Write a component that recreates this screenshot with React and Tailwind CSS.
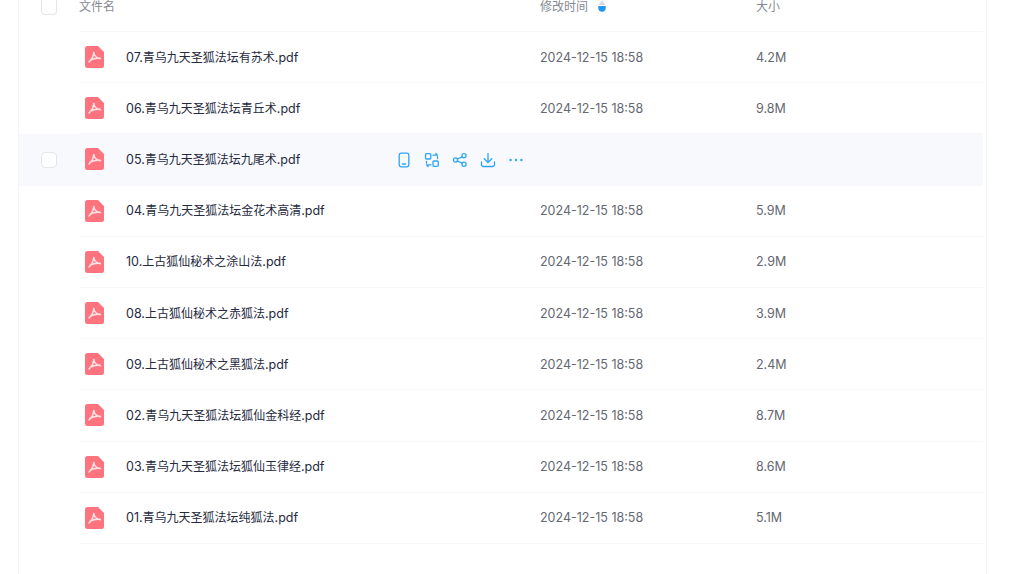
const FONT = "font-['Inter','Noto_Sans_CJK_SC',sans-serif]";

const rows = [
  ["07.", "青乌九天圣狐法坛有苏术", "4.2M"],
  ["06.", "青乌九天圣狐法坛青丘术", "9.8M"],
  ["05.", "青乌九天圣狐法坛九尾术", ""],
  ["04.", "青乌九天圣狐法坛金花术高清", "5.9M"],
  ["10.", "上古狐仙秘术之涂山法", "2.9M"],
  ["08.", "上古狐仙秘术之赤狐法", "3.9M"],
  ["09.", "上古狐仙秘术之黑狐法", "2.4M"],
  ["02.", "青乌九天圣狐法坛狐仙金科经", "8.7M"],
  ["03.", "青乌九天圣狐法坛狐仙玉律经", "8.6M"],
  ["01.", "青乌九天圣狐法坛纯狐法", "5.1M"],
];

function PdfIcon() {
  return (
    <svg width="19" height="22" viewBox="0 0 19 22" className="block">
      <path d="M2.5 0H13L19 6V19.5A2.5 2.5 0 0 1 16.5 22H2.5A2.5 2.5 0 0 1 0 19.5V2.5A2.5 2.5 0 0 1 2.5 0Z" fill="#ff737f" />
      <path d="M8.8 6.5C8.6 9.5 6.6 13.6 4 16 M8.8 6.5C9.2 9.5 11.6 12 15.4 12.8 M5.2 14.2C7.8 12.8 11.4 12.1 15 12.4" fill="none" stroke="#ffe1e4" strokeWidth="1.6" strokeLinecap="round" />
    </svg>
  );
}

function Actions() {
  const cls = "w-[16px] h-[16px]";
  const p = { fill: "none", stroke: "#2ca6f5", strokeWidth: 1.3, strokeLinecap: "round", strokeLinejoin: "round", viewBox: "0 0 16 16", className: cls };
  return (
    <div className="flex items-center gap-[12.1px] ml-[51px] mt-[1px]">
      <svg {...p}>
        <rect x="3.2" y="1.2" width="9.6" height="13.6" rx="2" />
        <path d="M6.5 12H9.5" />
      </svg>
      <svg {...p}>
        <rect x="1.5" y="1.7" width="5.3" height="5.3" rx="1" />
        <rect x="9" y="9" width="5.3" height="5.3" rx="1" />
        <path d="M9 3.2H13.5L11.8 1.5 M13.5 4.7V6.5 M7 12.8H2.5L4.2 14.5 M2.5 11.2V9.3" />
      </svg>
      <svg {...p}>
        <circle cx="3.5" cy="8" r="2.1" />
        <circle cx="12" cy="3.8" r="2.1" />
        <circle cx="12" cy="12.2" r="2.1" />
        <path d="M5.4 7L10.1 4.8 M5.4 9L10.1 11.2" />
      </svg>
      <svg {...p}>
        <path d="M8 1.5V10.5 M4.2 6.8L8 10.5L11.8 6.8 M1.5 10V12.8A1.7 1.7 0 0 0 3.2 14.5H12.8A1.7 1.7 0 0 0 14.5 12.8V10" />
      </svg>
      <svg viewBox="0 0 16 16" className={cls} fill="#2ca6f5">
        <circle cx="2.6" cy="8" r="1.2" />
        <circle cx="8" cy="8" r="1.2" />
        <circle cx="13.4" cy="8" r="1.2" />
      </svg>
    </div>
  );
}

function Name({ pre, cjk, width }) {
  return (
    <span className={`${width} shrink-0 pt-[2px] text-[12.5px] text-[#262a3e] whitespace-nowrap`}>
      {pre}
      <span className="text-[12px]">{cjk}</span>
      .pdf
    </span>
  );
}

function Row({ pre, cjk, size, hover }) {
  return (
    <div className={`flex items-stretch h-[51.2px] w-[964px] ${hover ? "bg-[#f7f9fd]" : ""}`}>
      <div className="w-[60px] shrink-0 flex items-center pl-[22px]">
        {hover && <div className="w-[16px] h-[16px] rounded-[4px] border border-[#e3e6ea] bg-white" />}
      </div>
      <div className={`flex-1 flex items-center border-b ${hover ? "border-transparent" : "border-[#f8f8f9]"}`}>
        <div className="w-[47px] shrink-0 pl-[6px]"><PdfIcon /></div>
        {hover ? (
          <div className="w-[414px] shrink-0 flex items-center">
            <Name pre={pre} cjk={cjk} width="w-[219px]" />
            <Actions />
          </div>
        ) : (
          <Name pre={pre} cjk={cjk} width="w-[414px]" />
        )}
        <span className="w-[216px] shrink-0 pt-[2px] text-[12.5px] text-[#646872] whitespace-nowrap">{hover ? "" : "2024-12-15 18:58"}</span>
        <span className="pt-[2px] text-[12.5px] text-[#646872]">{size}</span>
      </div>
    </div>
  );
}

export default function App() {
  return (
    <div className={`${FONT} w-[1024px] h-[574px] overflow-hidden bg-white`}>
      <div className="ml-[18px] w-[969px] h-[574px] border-x border-[#f5f5f6]">
        <div className="flex h-[32px] w-[964px]">
          <div className="w-[60px] shrink-0 pl-[22px]">
            <div className="w-[16px] h-[15px] rounded-b-[4px] border border-t-0 border-[#e3e6ea]" />
          </div>
          <div className="flex-1 flex border-b border-[#f8f8f9] text-[12px] text-[#858a94] leading-[13px]">
            <span className="w-[461px] shrink-0">文件名</span>
            <span className="w-[216px] shrink-0 flex items-start gap-[10px]">
              修改时间
              <svg width="8" height="12" viewBox="0 0 8 12">
                <path d="M4 0.3L7.4 5H0.6Z" fill="#d5d9df" />
                <path d="M0.3 6H7.7V7.8A3.7 4 0 0 1 0.3 7.8Z" fill="#2196f3" />
              </svg>
            </span>
            <span>大小</span>
          </div>
        </div>
        {rows.map(([pre, cjk, s], i) => (
          <Row key={pre} pre={pre} cjk={cjk} size={s} hover={i === 2} />
        ))}
      </div>
    </div>
  );
}
